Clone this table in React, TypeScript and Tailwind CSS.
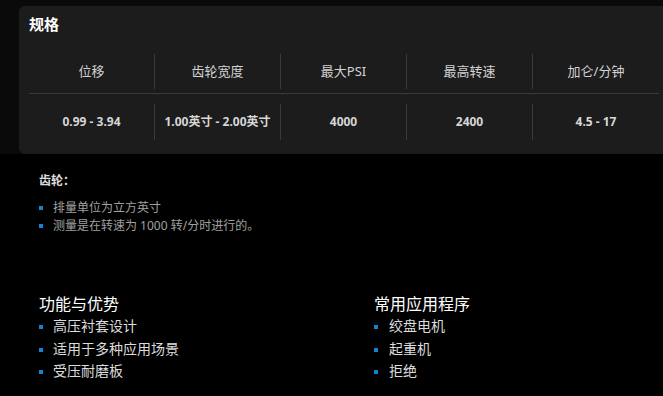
import React from 'react';

const headers = ['位移', '齿轮宽度', '最大PSI', '最高转速', '加仑/分钟'];
const values = ['0.99 - 3.94', '1.00英寸 - 2.00英寸', '4000', '2400', '4.5 - 17'];
const notes = ['排量单位为立方英寸', '测量是在转速为 1000 转/分时进行的。'];
const features = ['高压衬套设计', '适用于多种应用场景', '受压耐磨板'];
const apps = ['绞盘电机', '起重机', '拒绝'];

function Bullet() {
  return <span className="mt-[10px] h-[4px] w-[4px] shrink-0 bg-[#1683cf]" />;
}

export default function App() {
  return (
    <div className="min-h-screen overflow-hidden bg-black font-['Noto_Sans','Noto_Sans_CJK_SC',sans-serif]">
      <div className="bg-[#0a0a0a] pl-[19px] pt-[6px]">
        <div className="w-[660px] rounded-md bg-[#1c1c1c] pb-[14px] pl-[10px] pt-[8px]">
          <h2 className="text-[15px] font-bold leading-[20px] text-white">规格</h2>
          <div className="mt-[20px] w-[630px]">
            <div className="grid grid-cols-5 border-b border-[#3a3a3a] pb-[4px]">
              {headers.map((h, i) => (
                <div
                  key={h}
                  className={`flex h-[35px] items-center justify-center text-[13px] text-[#d2d2d2] ${i < 4 ? 'border-r border-[#3a3a3a]' : ''}`}
                >
                  {h}
                </div>
              ))}
            </div>
            <div className="grid grid-cols-5 pt-[10px]">
              {values.map((v, i) => (
                <div
                  key={v}
                  className={`flex h-[36px] items-center justify-center text-[12px] font-bold text-[#d6d6d6] ${i < 4 ? 'border-r border-[#3a3a3a]' : ''}`}
                >
                  {v}
                </div>
              ))}
            </div>
          </div>
        </div>
      </div>

      <div className="pl-[39px] pt-[18px]">
        <p className="text-[12px] font-bold leading-[18px] text-[#dddddd]">齿轮：</p>
        <ul className="mt-[9px]">
          {notes.map((n) => (
            <li key={n} className="flex gap-[10px] text-[12px] leading-[18px] text-[#a0a0a0]">
              <span className="mt-[7px] h-[4px] w-[4px] shrink-0 bg-[#1683cf]" />
              {n}
            </li>
          ))}
        </ul>

        <div className="mt-[58px] grid w-[670px] grid-cols-2">
          <div>
            <h3 className="text-[16px] leading-[22px] text-white">功能与优势</h3>
            <ul>
              {features.map((f) => (
                <li key={f} className="flex gap-[10px] text-[14px] leading-[22.5px] text-[#dcdcdc]">
                  <Bullet />
                  {f}
                </li>
              ))}
            </ul>
          </div>
          <div>
            <h3 className="text-[16px] leading-[22px] text-white">常用应用程序</h3>
            <ul>
              {apps.map((a) => (
                <li key={a} className="flex gap-[11px] text-[14px] leading-[22.5px] text-[#dcdcdc]">
                  <Bullet />
                  {a}
                </li>
              ))}
            </ul>
          </div>
        </div>
      </div>
    </div>
  );
}
